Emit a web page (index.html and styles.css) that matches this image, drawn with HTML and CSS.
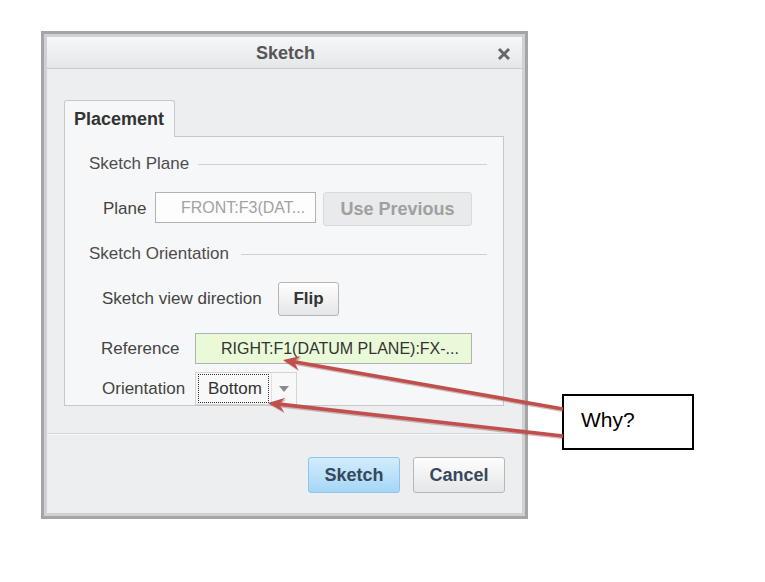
FILE: index.html
```html
<!DOCTYPE html>
<html>
<head>
<meta charset="utf-8">
<link rel="stylesheet" href="styles.css">
</head>
<body>
<div class="page">
  <div class="dialog">
    <div class="inner">
      <div class="titlebar">
        <span class="title">Sketch</span>
        <svg class="close" viewBox="0 0 14 14" width="14" height="14"><path d="M2 2 L12 12 M12 2 L2 12" stroke="#676767" stroke-width="3" fill="none"/></svg>
      </div>
      <div class="content">
        <div class="tabs"><div class="tab">Placement</div></div>
        <div class="panel">
          <div class="section"><span class="section-title">Sketch Plane</span><span class="rule"></span></div>
          <div class="row row-plane">
            <span class="label lbl-plane">Plane</span>
            <div class="field field-plane">FRONT:F3(DAT...</div>
            <button class="btn btn-disabled">Use Previous</button>
          </div>
          <div class="section section-orient"><span class="section-title">Sketch Orientation</span><span class="rule rule-orient"></span></div>
          <div class="row row-flip">
            <span class="label lbl-flip">Sketch view direction</span>
            <button class="btn btn-flip">Flip</button>
          </div>
          <div class="row row-ref">
            <span class="label lbl-ref">Reference</span>
            <div class="field field-ref">RIGHT:F1(DATUM PLANE):FX-...</div>
          </div>
          <div class="row row-orient">
            <span class="label lbl-orient">Orientation</span>
            <div class="combo">
              <span class="combo-value"><span class="focus">Bottom</span></span>
              <span class="combo-arrow"><svg viewBox="0 0 10 6" width="10" height="6"><path d="M0 0 L10 0 L5 6 Z" fill="#8a8a8a"/></svg></span>
            </div>
          </div>
        </div>
      </div>
      <div class="separator"></div>
      <div class="footer">
        <button class="btn btn-primary">Sketch</button>
        <button class="btn btn-default">Cancel</button>
      </div>
    </div>
  </div>
  <div class="callout">Why?</div>
  <svg class="arrows" width="765" height="582" viewBox="0 0 765 582">
    <g stroke="#7a2a28" fill="#7a2a28" opacity="0.3" transform="translate(1,1.5)">
      <line x1="563" y1="409" x2="294" y2="361.8" stroke-width="3.6"/>
      <polygon points="283,360 300.6,356 294,361.8 298.2,370" stroke="none"/>
      <line x1="563" y1="436" x2="279" y2="404.1" stroke-width="3.6"/>
      <polygon points="268,403 285.4,397.8 279,404.1 283.9,412" stroke="none"/>
    </g>
    <g stroke="#c0504d" fill="#c0504d">
      <line x1="563" y1="409" x2="294" y2="361.8" stroke-width="3.6"/>
      <polygon points="283,360 300.6,356 294,361.8 298.2,370" stroke="none"/>
      <line x1="563" y1="436" x2="279" y2="404.1" stroke-width="3.6"/>
      <polygon points="268,403 285.4,397.8 279,404.1 283.9,412" stroke="none"/>
    </g>
  </svg>
</div>
</body>
</html>
```

FILE: styles.css
```css
html, body {
  margin: 0;
  background: #ffffff;
}

body {
  font-family: "Liberation Sans", Arial, sans-serif;
}

.page {
  position: relative;
  width: 765px;
  height: 582px;
  padding: 31px 0 0 41px;
  box-sizing: border-box;
}

.dialog {
  width: 487px;
  height: 488px;
  box-sizing: border-box;
  border: 3px solid #a3a5a8;
  padding: 3px;
  background: #cfd1d4;
}

.inner {
  height: 100%;
  background: #eceef0;
  display: flex;
  flex-direction: column;
}

.titlebar {
  height: 29px;
  padding: 2px 10px 0 12px;
  border-bottom: 1px solid #c8cacc;
  background: linear-gradient(#f6f7f8, #e4e6e8);
  display: grid;
  grid-template-columns: 1fr auto 1fr;
  align-items: center;
}

.title {
  grid-column: 2;
  font-weight: bold;
  font-size: 18px;
  color: #565656;
}

.close {
  grid-column: 3;
  justify-self: end;
  display: block;
  margin-right: 1px;
}

.content {
  padding: 31px 18px 0 17px;
}

.tabs {
  display: flex;
}

.tab {
  position: relative;
  z-index: 1;
  width: 111px;
  height: 37px;
  box-sizing: border-box;
  margin-bottom: -1px;
  border: 1px solid #c6c8ca;
  border-bottom: none;
  border-radius: 3px 3px 0 0;
  background: #f6f7f8;
  padding-left: 9px;
  font-weight: bold;
  font-size: 18px;
  line-height: 36px;
  color: #333;
}

.panel {
  height: 270px;
  box-sizing: border-box;
  border: 1px solid #c6c8ca;
  background: #f6f7f8;
  padding: 17px 16px 0 24px;
}

.section {
  display: flex;
  align-items: center;
  height: 20px;
}

.section-title {
  font-size: 17px;
  color: #4d4d4d;
  line-height: 20px;
  white-space: nowrap;
}

.rule {
  flex: 1;
  height: 1px;
  background: #cfd1d3;
  margin-left: 9px;
}

.rule-orient {
  margin-left: 12px;
}

.section-orient {
  margin-top: 18px;
}

.row {
  display: flex;
  align-items: flex-start;
}

.label {
  font-size: 17px;
  color: #444;
  white-space: nowrap;
  box-sizing: border-box;
}

.row-plane {
  margin-top: 18px;
}

.lbl-plane {
  margin-left: 14px;
  width: 52px;
  line-height: 34px;
}

.field {
  box-sizing: border-box;
  height: 31px;
  border: 1px solid #b0b2b4;
  font-size: 16px;
  line-height: 29px;
  white-space: nowrap;
  overflow: hidden;
}

.field-plane {
  width: 161px;
  background: #fdfdfd;
  color: #a2a2a2;
  padding-left: 25px;
}

.btn {
  box-sizing: border-box;
  height: 34px;
  border-radius: 3px;
  font-family: "Liberation Sans", Arial, sans-serif;
  font-weight: bold;
  font-size: 18px;
  padding: 0;
  text-align: center;
}

.btn-disabled {
  width: 149px;
  margin-left: 7px;
  background: #e9eaeb;
  border: 1px solid #d9dadb;
  color: #a0a0a0;
}

.row-flip {
  margin-top: 18px;
}

.lbl-flip {
  margin-left: 13px;
  width: 176px;
  line-height: 34px;
}

.btn-flip {
  width: 61px;
  background: linear-gradient(#fefefe, #e5e6e7);
  border: 1px solid #b3b5b7;
  color: #333;
  font-size: 17px;
}

.row-ref {
  margin-top: 17px;
}

.lbl-ref {
  margin-left: 12px;
  width: 94px;
  line-height: 31px;
}

.field-ref {
  width: 277px;
  background: #eafad9;
  color: #333;
  padding-left: 25px;
}

.row-orient {
  margin-top: 8px;
}

.lbl-orient {
  margin-left: 13px;
  width: 93px;
  line-height: 33px;
}

.combo {
  display: flex;
  width: 102px;
  height: 33px;
  box-sizing: border-box;
  border: 1px solid #d2d4d6;
  background: #f8f8f8;
}

.combo-value {
  width: 76px;
  padding: 1px 2px;
  box-sizing: border-box;
  border-right: 1px solid #e0e2e4;
}

.focus {
  display: block;
  height: 29px;
  box-sizing: border-box;
  border: 1px dotted #333;
  padding-left: 9px;
  font-size: 17px;
  line-height: 27px;
  color: #333;
}

.combo-arrow {
  flex: 1;
  display: flex;
  align-items: center;
  justify-content: center;
}

.combo-arrow svg {
  display: block;
}

.separator {
  margin-top: 27px;
  height: 1px;
  background: #d4d6d8;
  box-shadow: 0 1px 0 #f8f9fa;
}

.footer {
  padding: 23px 17px 20px;
  display: flex;
  justify-content: flex-end;
  gap: 13px;
}

.btn-primary,
.btn-default {
  width: 92px;
  height: 36px;
  color: #36485b;
}

.btn-primary {
  background: linear-gradient(#d2ecfd, #a5d6f7);
  border: 1px solid #8ec5ec;
}

.btn-default {
  background: linear-gradient(#fdfdfd, #e5e6e7);
  border: 1px solid #b5b7b9;
}

.callout {
  position: absolute;
  left: 562px;
  top: 394px;
  width: 132px;
  height: 56px;
  box-sizing: border-box;
  border: 2px solid #000;
  background: #fff;
  padding-left: 17px;
  font-family: "Liberation Sans", Arial, sans-serif;
  font-size: 21px;
  line-height: 48px;
  color: #000;
}

.arrows {
  position: absolute;
  left: 0;
  top: 0;
  pointer-events: none;
}
```
